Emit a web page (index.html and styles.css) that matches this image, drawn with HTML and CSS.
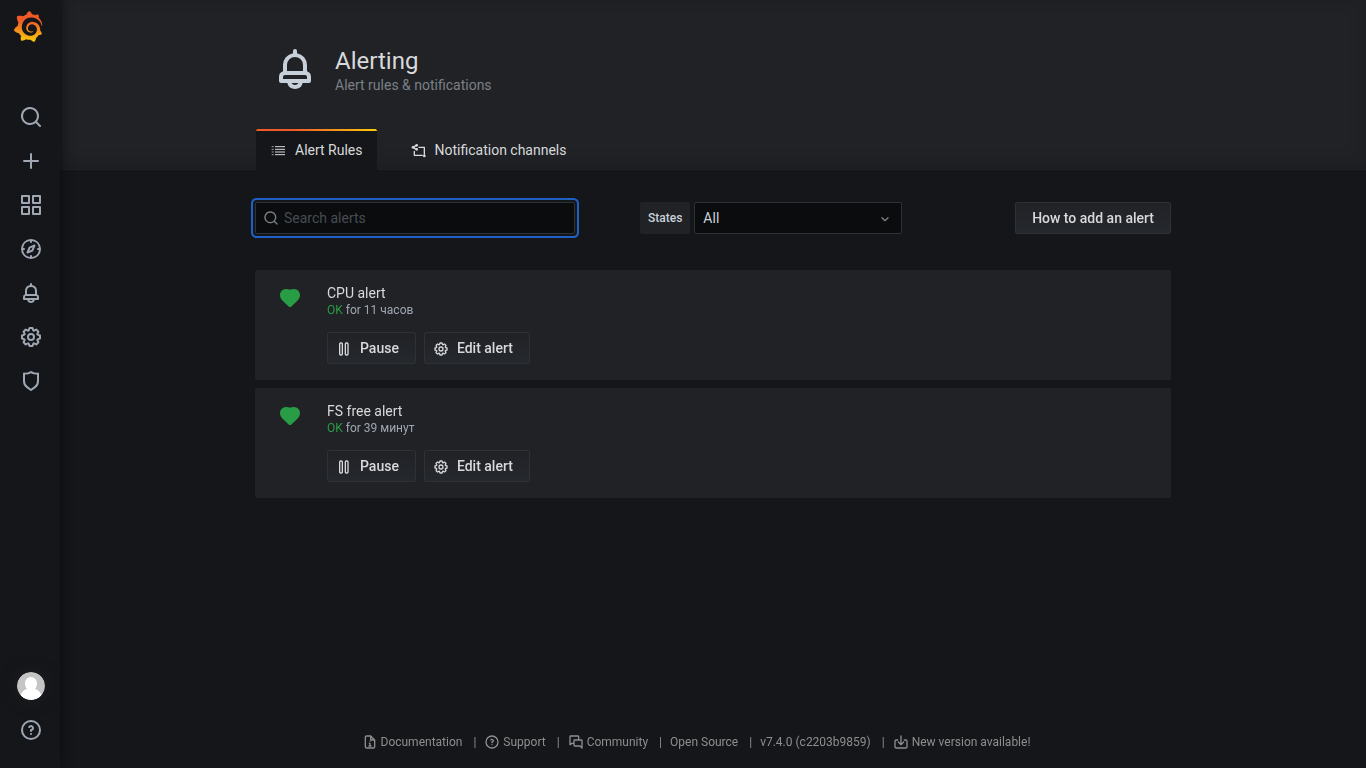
FILE: index.html
```html
<!DOCTYPE html>
<html lang="en">
<head>
<meta charset="utf-8">
<meta name="viewport" content="width=device-width, initial-scale=1">
<title>Alerting - Grafana</title>
<link rel="stylesheet" href="styles.css">
</head>
<body>
<svg class="sprite" aria-hidden="true">
  <symbol id="search" viewBox="0 0 24 24"><path d="M21.71,20.29,18,16.61A9,9,0,1,0,16.61,18l3.68,3.68a1,1,0,0,0,1.42,0A1,1,0,0,0,21.71,20.29ZM11,18a7,7,0,1,1,7-7A7,7,0,0,1,11,18Z"/></symbol>
  <symbol id="plus" viewBox="0 0 24 24"><path d="M19,11H13V5a1,1,0,0,0-2,0v6H5a1,1,0,0,0,0,2h6v6a1,1,0,0,0,2,0V13h6a1,1,0,0,0,0-2Z"/></symbol>
  <symbol id="apps" viewBox="0 0 24 24"><path d="M10,13H3a1,1,0,0,0-1,1v7a1,1,0,0,0,1,1h7a1,1,0,0,0,1-1V14A1,1,0,0,0,10,13ZM9,20H4V15H9ZM21,2H14a1,1,0,0,0-1,1v7a1,1,0,0,0,1,1h7a1,1,0,0,0,1-1V3A1,1,0,0,0,21,2ZM20,9H15V4h5Zm1,4H14a1,1,0,0,0-1,1v7a1,1,0,0,0,1,1h7a1,1,0,0,0,1-1V14A1,1,0,0,0,21,13Zm-1,7H15V15h5ZM10,2H3A1,1,0,0,0,2,3v7a1,1,0,0,0,1,1h7a1,1,0,0,0,1-1V3A1,1,0,0,0,10,2ZM9,9H4V4H9Z"/></symbol>
  <symbol id="compass" viewBox="0 0 24 24"><path d="M12,2A10,10,0,1,0,22,12,10,10,0,0,0,12,2Zm1,17.93V19a1,1,0,0,0-2,0v.93A8,8,0,0,1,4.07,13H5a1,1,0,0,0,0-2H4.07A8,8,0,0,1,11,4.07V5a1,1,0,0,0,2,0V4.07A8,8,0,0,1,19.93,11H19a1,1,0,0,0,0,2h.93A8,8,0,0,1,13,19.93ZM15.14,7.55l-5,2.12a1,1,0,0,0-.52.52l-2.12,5a1,1,0,0,0,.21,1.1,1,1,0,0,0,.7.3.93.93,0,0,0,.4-.09l5-2.12a1,1,0,0,0,.52-.52l2.12-5a1,1,0,0,0-1.31-1.31Zm-2.49,5.1-2.28,1,1-2.28,2.28-1Z"/></symbol>
  <symbol id="bell" viewBox="0 0 24 24"><path d="M18,13.18V10a6,6,0,0,0-5-5.91V3a1,1,0,0,0-2,0V4.09A6,6,0,0,0,6,10v3.18A3,3,0,0,0,4,16v2a1,1,0,0,0,1,1H8.14a4,4,0,0,0,7.72,0H19a1,1,0,0,0,1-1V16A3,3,0,0,0,18,13.18ZM8,10a4,4,0,0,1,8,0v3H8Zm4,10a2,2,0,0,1-1.72-1h3.44A2,2,0,0,1,12,20Zm6-3H6V16a1,1,0,0,1,1-1H17a1,1,0,0,1,1,1Z"/></symbol>
  <symbol id="cog" viewBox="0 0 24 24"><path d="M21.32,9.55l-1.89-.63.89-1.78A1,1,0,0,0,20.13,6L18,3.87a1,1,0,0,0-1.15-.19l-1.78.89-.63-1.89A1,1,0,0,0,13.5,2h-3a1,1,0,0,0-.95.68L8.92,4.57,7.14,3.68A1,1,0,0,0,6,3.87L3.87,6a1,1,0,0,0-.19,1.15l.89,1.78-1.89.63A1,1,0,0,0,2,10.5v3a1,1,0,0,0,.68.95l1.89.63-.89,1.78A1,1,0,0,0,3.87,18L6,20.13a1,1,0,0,0,1.15.19l1.78-.89.63,1.89a1,1,0,0,0,.95.68h3a1,1,0,0,0,.95-.68l.63-1.89,1.78.89A1,1,0,0,0,18,20.13L20.13,18a1,1,0,0,0,.19-1.15l-.89-1.78,1.89-.63A1,1,0,0,0,22,13.5v-3A1,1,0,0,0,21.32,9.55ZM20,12.78l-1.2.4A2,2,0,0,0,17.64,16l.57,1.14-1.1,1.1L16,17.64a2,2,0,0,0-2.79,1.16l-.4,1.2H11.22l-.4-1.2A2,2,0,0,0,8,17.64l-1.14.57-1.1-1.1L6.36,16A2,2,0,0,0,5.2,13.18L4,12.78V11.22l1.2-.4A2,2,0,0,0,6.36,8L5.79,6.89l1.1-1.1L8,6.36A2,2,0,0,0,10.82,5.2l.4-1.2h1.56l.4,1.2A2,2,0,0,0,16,6.36l1.14-.57,1.1,1.1L17.64,8a2,2,0,0,0,1.16,2.79l1.2.4ZM12,8a4,4,0,1,0,4,4A4,4,0,0,0,12,8Zm0,6a2,2,0,1,1,2-2A2,2,0,0,1,12,14Z"/></symbol>
  <symbol id="shield" viewBox="0 0 24 24"><path d="M19.63,3.65a1,1,0,0,0-.84-.2,8,8,0,0,1-6.22-1.27,1,1,0,0,0-1.14,0A8,8,0,0,1,5.21,3.45a1,1,0,0,0-.84.2A1,1,0,0,0,4,4.43v7.45a9,9,0,0,0,3.77,7.33l3.65,2.6a1,1,0,0,0,1.16,0l3.65-2.6A9,9,0,0,0,20,11.88V4.43A1,1,0,0,0,19.63,3.65ZM18,11.88a7,7,0,0,1-2.93,5.7L12,19.77,8.93,17.58A7,7,0,0,1,6,11.88V5.58a10,10,0,0,0,6-1.39,10,10,0,0,0,6,1.39Z"/></symbol>
  <symbol id="question" viewBox="0 0 24 24"><path d="M11.29,15.29a1.58,1.58,0,0,0-.12.15.76.76,0,0,0-.09.18.64.64,0,0,0-.06.18,1.36,1.36,0,0,0,0,.2.84.84,0,0,0,.08.38.9.9,0,0,0,.54.54.94.94,0,0,0,.76,0,.9.9,0,0,0,.54-.54A1,1,0,0,0,13,16a1,1,0,0,0-.29-.71A1,1,0,0,0,11.29,15.29ZM12,2A10,10,0,1,0,22,12,10,10,0,0,0,12,2Zm0,18a8,8,0,1,1,8-8A8,8,0,0,1,12,20ZM12,7A3,3,0,0,0,9.4,8.5a1,1,0,1,0,1.73,1A1,1,0,0,1,12,9a1,1,0,0,1,0,2,1,1,0,0,0-1,1v1a1,1,0,0,0,2,0v-.18A3,3,0,0,0,12,7Z"/></symbol>
  <symbol id="list" viewBox="0 0 24 24"><g fill="none" stroke="currentColor" stroke-width="1.5"><path d="M1 7h3M1 11h3M1 15h3M1 19h3" opacity=".7"/><path d="M6 7h15M6 11h15M6 15h15M6 19h15"/></g></symbol>
  <symbol id="channel" viewBox="0 0 24 24"><g fill="none" stroke="currentColor" stroke-width="2" stroke-linecap="round" stroke-linejoin="round"><path d="M3 8l5-3M3 8l5 3M12 8h8v12M5 14v6h12"/></g><circle cx="3" cy="8" r="2"/><circle cx="8.500" cy="5" r="2"/><circle cx="8.500" cy="11" r="2"/><circle cx="20" cy="21" r="2"/></symbol>
  <symbol id="pause" viewBox="0 0 24 24"><g fill="none" stroke="currentColor" stroke-width="2"><rect x="5.500" y="3" width="4" height="18" rx="1.500"/><rect x="14" y="3" width="4" height="18" rx="1.500"/></g></symbol>
  <symbol id="heart" viewBox="0 0 24 24"><path d="M12 3.800C11 3.100 9.500 2.800 8 2.900 4.600 3 2 5.700 2 9c0 2.200.9 4 2.400 5.400l6.200 6.100c.8.8 2 .8 2.800 0l6.200-6.100C21.100 13 22 11.200 22 9c0-3.300-2.600-6-6-6.100-1.500-.1-3 .2-4 .9z"/></symbol>
  <symbol id="document" viewBox="0 0 24 24"><path d="M13 3H7a2 2 0 0 0-2 2v14a2 2 0 0 0 2 2h10a2 2 0 0 0 2-2V9zM13 3v6h6M12 11h.01M11 14h1v4M10.500 18h3" fill="none" stroke="currentColor" stroke-width="2" stroke-linecap="round" stroke-linejoin="round"/></symbol>
  <symbol id="comments" viewBox="0 0 24 24"><path d="M6 14l-3 2V4a1 1 0 0 1 1-1h11a1 1 0 0 1 1 1v4M10 9h10a1 1 0 0 1 1 1v11l-3-3h-8a1 1 0 0 1-1-1v-7a1 1 0 0 1 1-1zM9 14H5" fill="none" stroke="currentColor" stroke-width="2" stroke-linecap="round" stroke-linejoin="round"/></symbol>
  <symbol id="import" viewBox="0 0 24 24"><path d="M7 9H5a2 2 0 0 0-2 2v8a2 2 0 0 0 2 2h14a2 2 0 0 0 2-2v-8a2 2 0 0 0-2-2h-2M12 3v12M8 12l4 4 4-4" fill="none" stroke="currentColor" stroke-width="2" stroke-linecap="round" stroke-linejoin="round"/></symbol>
  <symbol id="angle-down" viewBox="0 0 24 24"><path d="M7.500 11.500l4.500 4.500 4.500-4.500" fill="none" stroke="currentColor" stroke-width="2" stroke-linecap="round" stroke-linejoin="round"/></symbol>
</svg>
<div class="app">
  <nav class="sidebar" aria-label="Main menu">
    <a class="logo" href="#" aria-label="Home">
      <svg viewBox="0 0 351 365"><defs><linearGradient id="flame" gradientUnits="userSpaceOnUse" x1="175" y1="445" x2="175" y2="114"><stop offset="0" stop-color="#fff100"/><stop offset="1" stop-color="#f05a28"/></linearGradient></defs><path fill="url(#flame)" d="M342,161.2c-0.6-6.1-1.6-13.1-3.6-20.9c-2-7.7-5-16.2-9.4-25c-4.4-8.8-10.1-17.9-17.5-26.8c-2.9-3.5-6.1-6.9-9.5-10.2c5.1-20.3-6.2-37.9-6.2-37.9c-19.5-1.2-31.9,6.1-36.5,9.4c-0.8-0.3-1.5-0.7-2.3-1c-3.3-1.3-6.7-2.6-10.3-3.7c-3.5-1.1-7.1-2.1-10.8-3c-3.7-0.9-7.4-1.6-11.2-2.2c-0.7-0.1-1.3-0.2-2-0.3c-8.5-27.2-32.9-38.6-32.9-38.6c-27.3,17.3-32.4,41.5-32.4,41.5s-0.1,0.5-0.3,1.4c-1.5,0.4-3,0.9-4.5,1.3c-2.1,0.6-4.2,1.4-6.2,2.2c-2.1,0.8-4.1,1.6-6.2,2.5c-4.1,1.8-8.2,3.8-12.2,6c-3.9,2.2-7.7,4.6-11.4,7.1c-0.5-0.2-1-0.4-1-0.4c-37.8-14.4-71.3,2.9-71.3,2.9c-3.1,40.2,15.1,65.5,18.7,70.1c-0.9,2.5-1.7,5-2.5,7.5c-2.8,9.1-4.9,18.4-6.2,28.1c-0.2,1.4-0.4,2.8-0.5,4.2C18.8,192.7,8.5,228,8.5,228c29.1,33.5,63.1,35.6,63.1,35.6c0,0,0.1-0.1,0.1-0.1c4.3,7.7,9.3,15,14.9,21.9c2.4,2.9,4.8,5.6,7.4,8.3c-10.6,30.4,1.5,55.6,1.5,55.6c32.4,1.2,53.7-14.2,58.2-17.7c3.2,1.1,6.5,2.1,9.8,2.9c10,2.6,20.2,4.1,30.4,4.5c2.5,0.1,5.1,0.2,7.6,0.1l1.2,0l0.8,0l1.6,0l1.6-0.1l0,0.1c15.3,21.8,42.1,24.9,42.1,24.9c19.1-20.1,20.2-40.1,20.2-44.4l0,0c0,0,0-0.1,0-0.3c0-0.4,0-0.6,0-0.6l0,0c0-0.3,0-0.6,0-0.9c4-2.8,7.8-5.8,11.4-9.1c7.6-6.9,14.3-14.8,19.9-23.3c0.5-0.8,1-1.6,1.5-2.4c21.6,1.2,36.9-13.4,36.9-13.4c-3.6-22.5-16.4-33.5-19.1-35.6l0,0c0,0-0.1-0.1-0.3-0.2c-0.2-0.1-0.2-0.2-0.2-0.2c0,0,0,0,0,0c-0.1-0.1-0.3-0.2-0.5-0.3c0.1-1.4,0.2-2.7,0.3-4.1c0.2-2.4,0.2-4.9,0.2-7.3l0-1.8l0-0.9l0-0.5c0-0.6,0-0.4,0-0.6l-0.1-1.5l-0.1-2c0-0.7-0.1-1.3-0.2-1.9c-0.1-0.6-0.1-1.3-0.2-1.9l-0.2-1.9l-0.3-1.9c-0.4-2.5-0.8-4.9-1.4-7.4c-2.3-9.7-6.1-18.9-11-27.2c-5-8.3-11.2-15.6-18.3-21.8c-7-6.2-14.9-11.2-23.1-14.9c-8.3-3.7-16.9-6.1-25.5-7.2c-4.3-0.6-8.6-0.8-12.9-0.7l-1.6,0l-0.4,0c-0.1,0-0.6,0-0.5,0l-0.7,0l-1.6,0.1c-0.6,0-1.2,0.1-1.7,0.1c-2.2,0.2-4.4,0.5-6.5,0.9c-8.6,1.6-16.7,4.7-23.8,9c-7.1,4.3-13.3,9.6-18.3,15.6c-5,6-8.9,12.7-11.6,19.6c-2.7,6.9-4.2,14.1-4.6,21c-0.1,1.7-0.1,3.5-0.1,5.2c0,0.4,0,0.9,0,1.3l0.1,1.4c0.1,0.8,0.1,1.7,0.2,2.5c0.3,3.5,1,6.9,1.9,10.1c1.9,6.5,4.9,12.4,8.6,17.4c3.7,5,8.2,9.1,12.9,12.4c4.7,3.2,9.8,5.5,14.8,7c5,1.5,10,2.1,14.7,2.1c0.6,0,1.2,0,1.7,0c0.3,0,0.6,0,0.9,0c0.3,0,0.6,0,0.9-0.1c0.5,0,1-0.1,1.5-0.1c0.1,0,0.3,0,0.4-0.1l0.5-0.1c0.3,0,0.6-0.1,0.9-0.1c0.6-0.1,1.1-0.2,1.7-0.3c0.6-0.1,1.1-0.2,1.6-0.4c1.1-0.2,2.1-0.6,3.1-0.9c2-0.7,4-1.5,5.7-2.4c1.8-0.9,3.4-2,5-3c0.4-0.3,0.9-0.6,1.3-1c1.6-1.3,1.9-3.7,0.6-5.3c-1.1-1.4-3.1-1.8-4.7-0.9c-0.4,0.2-0.8,0.4-1.2,0.6c-1.4,0.7-2.8,1.3-4.3,1.8c-1.5,0.5-3.1,0.9-4.7,1.2c-0.8,0.1-1.6,0.2-2.5,0.3c-0.4,0-0.8,0.1-1.3,0.1c-0.4,0-0.9,0-1.2,0c-0.4,0-0.8,0-1.2,0c-0.5,0-1,0-1.5-0.1c0,0-0.3,0-0.1,0l-0.2,0l-0.3,0c-0.2,0-0.5,0-0.7-0.1c-0.5-0.1-0.9-0.1-1.4-0.2c-3.7-0.5-7.4-1.6-10.9-3.2c-3.6-1.6-7-3.8-10.1-6.6c-3.1-2.8-5.8-6.1-7.9-9.9c-2.1-3.8-3.6-8-4.3-12.4c-0.3-2.2-0.5-4.5-0.4-6.7c0-0.6,0.1-1.2,0.1-1.8c0,0.2,0-0.1,0-0.1l0-0.2l0-0.5c0-0.3,0.1-0.6,0.1-0.9c0.1-1.2,0.3-2.4,0.5-3.6c1.7-9.6,6.5-19,13.9-26.1c1.9-1.8,3.9-3.4,6-4.9c2.1-1.5,4.4-2.8,6.8-3.9c2.4-1.1,4.8-2,7.4-2.7c2.5-0.7,5.1-1.1,7.8-1.4c1.3-0.1,2.6-0.2,4-0.2c0.4,0,0.6,0,0.9,0l1.1,0l0.7,0c0.3,0,0,0,0.1,0l0.3,0l1.1,0.1c2.9,0.2,5.7,0.6,8.5,1.3c5.6,1.2,11.1,3.3,16.2,6.1c10.2,5.7,18.9,14.5,24.2,25.1c2.7,5.3,4.6,11,5.5,16.9c0.2,1.5,0.4,3,0.5,4.5l0.1,1.1l0.1,1.1c0,0.4,0,0.8,0,1.1c0,0.4,0,0.8,0,1.1l0,1l0,1.1c0,0.7-0.1,1.9-0.1,2.6c-0.1,1.6-0.3,3.3-0.5,4.9c-0.2,1.6-0.5,3.2-0.8,4.8c-0.3,1.6-0.7,3.2-1.1,4.7c-0.8,3.1-1.8,6.2-3,9.3c-2.4,6-5.6,11.8-9.4,17.1c-7.7,10.6-18.2,19.2-30.2,24.7c-6,2.7-12.3,4.7-18.8,5.7c-3.2,0.6-6.5,0.9-9.8,1l-0.6,0l-0.5,0l-1.1,0l-1.6,0l-0.8,0c0.4,0-0.1,0-0.1,0l-0.3,0c-1.8,0-3.5-0.1-5.3-0.3c-7-0.5-13.9-1.8-20.7-3.7c-6.7-1.9-13.2-4.6-19.4-7.8c-12.3-6.6-23.4-15.6-32-26.5c-4.3-5.4-8.1-11.3-11.2-17.4c-3.1-6.1-5.6-12.6-7.4-19.1c-1.8-6.6-2.9-13.3-3.4-20.1l-0.1-1.3l0-0.3l0-0.3l0-0.6l0-1.1l0-0.3l0-0.4l0-0.8l0-1.6l0-0.3c0,0,0,0.1,0-0.1l0-0.6c0-0.8,0-1.7,0-2.5c0.1-3.3,0.4-6.8,0.8-10.2c0.4-3.4,1-6.9,1.7-10.3c0.7-3.4,1.5-6.8,2.5-10.2c1.9-6.7,4.3-13.2,7.1-19.3c5.7-12.2,13.1-23.1,22-31.8c2.2-2.2,4.5-4.2,6.9-6.2c2.4-1.9,4.9-3.7,7.5-5.4c2.5-1.7,5.2-3.2,7.9-4.6c1.3-0.7,2.7-1.4,4.1-2c0.7-0.3,1.4-0.6,2.1-0.9c0.7-0.3,1.4-0.6,2.1-0.9c2.8-1.2,5.7-2.2,8.7-3.1c0.7-0.2,1.5-0.4,2.2-0.7c0.7-0.2,1.5-0.4,2.2-0.6c1.5-0.4,3-0.8,4.5-1.1c0.7-0.2,1.5-0.3,2.3-0.5c0.8-0.2,1.5-0.3,2.3-0.5c0.8-0.1,1.5-0.3,2.3-0.4l1.1-0.2l1.2-0.2c0.8-0.1,1.5-0.2,2.3-0.3c0.9-0.1,1.7-0.2,2.6-0.3c0.7-0.1,1.9-0.2,2.6-0.3c0.5-0.1,1.1-0.1,1.6-0.2l1.1-0.1l0.5-0.1l0.6,0c0.9-0.1,1.7-0.1,2.6-0.2l1.3-0.1c0,0,0.5,0,0.1,0l0.3,0l0.6,0c0.7,0,1.5-0.1,2.2-0.1c2.9-0.1,5.9-0.1,8.8,0c5.8,0.2,11.5,0.9,17,1.9c11.1,2.1,21.5,5.6,31,10.3c9.5,4.6,17.9,10.3,25.3,16.5c0.5,0.4,0.9,0.8,1.4,1.2c0.4,0.4,0.9,0.8,1.3,1.2c0.9,0.8,1.7,1.6,2.6,2.4c0.9,0.8,1.7,1.6,2.5,2.4c0.8,0.8,1.6,1.6,2.4,2.5c3.1,3.3,6,6.6,8.6,10c5.2,6.7,9.4,13.5,12.7,19.9c0.2,0.4,0.4,0.8,0.6,1.2c0.2,0.4,0.4,0.8,0.6,1.2c0.4,0.8,0.8,1.6,1.1,2.4c0.4,0.8,0.7,1.5,1.1,2.3c0.3,0.8,0.7,1.5,1,2.3c1.2,3,2.4,5.9,3.3,8.6c1.5,4.4,2.6,8.3,3.5,11.7c0.3,1.4,1.6,2.3,3,2.1c1.5-0.1,2.6-1.3,2.6-2.8C342.6,170.4,342.5,166.1,342,161.2z"/></svg>
    </a>
    <div class="menu">
      <a class="menu-item" href="#" aria-label="Search"><svg><use href="#search"/></svg></a>
      <a class="menu-item" href="#" aria-label="Create"><svg><use href="#plus"/></svg></a>
      <a class="menu-item" href="#" aria-label="Dashboards"><svg><use href="#apps"/></svg></a>
      <a class="menu-item" href="#" aria-label="Explore"><svg><use href="#compass"/></svg></a>
      <a class="menu-item" href="#" aria-label="Alerting"><svg><use href="#bell"/></svg></a>
      <a class="menu-item" href="#" aria-label="Configuration"><svg><use href="#cog"/></svg></a>
      <a class="menu-item" href="#" aria-label="Server admin"><svg><use href="#shield"/></svg></a>
    </div>
    <div class="menu menu-bottom">
      <a class="menu-item" href="#" aria-label="Profile"><svg class="avatar" viewBox="0 0 28 28"><clipPath id="disc"><circle cx="14" cy="14" r="14"/></clipPath><g clip-path="url(#disc)"><path fill="#c5c5c5" d="M0 0h28v28H0z"/><path fill="#fff" d="M14 5a6 6 0 0 1 6 6c0 3-1 5-2 6 4 1 6 4 7 8l-4 3H7l-4-3c1-4 3-7 7-8-1-1-2-3-2-6a6 6 0 0 1 6-6z"/></g></svg></a>
      <a class="menu-item" href="#" aria-label="Help"><svg><use href="#question"/></svg></a>
    </div>
  </nav>
  <div class="view">
    <header class="page-header">
      <div class="container">
        <div class="heading">
          <svg class="heading-icon"><use href="#bell"/></svg>
          <div class="heading-text">
            <h1 class="title">Alerting</h1>
            <div class="subtitle">Alert rules &amp; notifications</div>
          </div>
        </div>
        <nav class="tabs" aria-label="Alerting pages">
          <a class="tab tab-active" href="#" aria-current="page"><svg class="icon"><use href="#list"/></svg>Alert Rules</a>
          <a class="tab" href="#"><svg class="icon"><use href="#channel"/></svg>Notification channels</a>
        </nav>
      </div>
    </header>
    <main class="container body">
      <div class="toolbar">
        <label class="search"><svg class="icon"><use href="#search"/></svg><input type="text" placeholder="Search alerts" aria-label="Search alerts" autofocus></label>
        <div class="states">
          <label class="states-label" for="states">States</label>
          <div class="select">
            <select id="states"><option>All</option><option>OK</option><option>Not OK</option><option>Alerting</option><option>No data</option><option>Paused</option><option>Pending</option></select>
            <svg class="icon"><use href="#angle-down"/></svg>
          </div>
        </div>
        <button class="button button-help" type="button">How to add an alert</button>
      </div>
      <ul class="rules">
        <li class="rule">
          <svg class="heart"><use href="#heart"/></svg>
          <div class="rule-body">
            <a class="rule-name" href="#">CPU alert</a>
            <div class="rule-state"><span class="ok">OK</span> for 11 часов</div>
            <div class="actions">
              <button class="button" type="button"><svg class="icon"><use href="#pause"/></svg>Pause</button>
              <button class="button" type="button"><svg class="icon"><use href="#cog"/></svg>Edit alert</button>
            </div>
          </div>
        </li>
        <li class="rule">
          <svg class="heart"><use href="#heart"/></svg>
          <div class="rule-body">
            <a class="rule-name" href="#">FS free alert</a>
            <div class="rule-state"><span class="ok">OK</span> for 39 минут</div>
            <div class="actions">
              <button class="button" type="button"><svg class="icon"><use href="#pause"/></svg>Pause</button>
              <button class="button" type="button"><svg class="icon"><use href="#cog"/></svg>Edit alert</button>
            </div>
          </div>
        </li>
      </ul>
    </main>
    <footer class="footer">
      <ul class="links">
        <li><a href="#"><svg class="icon"><use href="#document"/></svg>Documentation</a></li>
        <li><a href="#"><svg class="icon"><use href="#question"/></svg>Support</a></li>
        <li><a href="#"><svg class="icon"><use href="#comments"/></svg>Community</a></li>
        <li><a href="#">Open Source</a></li>
        <li><a href="#">v7.4.0 (c2203b9859)</a></li>
        <li><a href="#"><svg class="icon"><use href="#import"/></svg>New version available!</a></li>
      </ul>
    </footer>
  </div>
</div>
</body>
</html>
```
FILE: styles.css
```css
*, *::before, *::after { box-sizing: border-box; }

body {
  margin: 0;
  background: #141619;
  color: #d8d9da;
  font: 14px/20px Roboto, "Liberation Sans", sans-serif;
}

a { color: inherit; text-decoration: none; }
svg { fill: currentColor; flex: none; }
ul { list-style: none; margin: 0; padding: 0; }
input, select, button { font: inherit; color: inherit; }

.sprite { display: none; }
.icon { width: 16px; height: 16px; }
.app { display: flex; min-height: 100vh; }

.sidebar {
  display: flex;
  flex-direction: column;
  flex: none;
  width: 60px;
  background: #141619;
  color: #9fa7b3;
  box-shadow: 0 0 10px #0b0c0e;
  z-index: 1;
}
.logo { padding: 11px 0 0 13px; }
.logo svg { display: block; width: 30px; height: 31px; }
.menu { display: flex; flex-direction: column; padding: 53px 0 0 2px; }
.menu-item { display: flex; align-items: center; justify-content: center; height: 44px; }
.menu-item svg { width: 24px; height: 24px; }
.menu-item .avatar { width: 28px; height: 28px; border-radius: 50%; box-shadow: 0 0 14px 2px #1b1d20; }
.menu-bottom { margin-top: auto; padding: 0 0 16px 2px; }

.view { display: flex; flex-direction: column; flex: 1; min-width: 0; }
.container { width: 100%; max-width: 980px; margin: 0 auto; padding: 0 32px; }

.page-header {
  background: #202226;
  border-bottom: 1px solid #202226;
  box-shadow: inset 0 -4px 14px #1b1d20;
}
.heading { display: flex; align-items: flex-start; gap: 16px; padding: 45px 0 34px 16px; }
.heading-icon { width: 48px; height: 48px; color: #c7d0d9; }
.heading-text { padding-top: 2px; }
.title { margin: 0; font-size: 24px; line-height: 28px; font-weight: 400; }
.subtitle { color: #7b8087; }

.tabs { display: flex; gap: 19px; padding-left: 1px; }
.tab { display: flex; align-items: center; gap: 8px; height: 40px; padding: 2px 14px 0 15px; position: relative; }
.tab-active { background: #141619; margin-bottom: -1px; height: 41px; padding-bottom: 1px; }
.tab-active::before {
  content: "";
  position: absolute;
  inset: 0 0 auto;
  height: 2px;
  border-radius: 2px 2px 0 0;
  background: linear-gradient(to right, #f05a28 30%, #fbca0a 99%);
}

.body { flex: 1; padding-top: 32px; }
.toolbar { display: flex; align-items: center; margin-bottom: 36px; }
.search {
  display: flex;
  align-items: center;
  width: 320px;
  height: 32px;
  padding: 0 7px;
  gap: 5px;
  border: 1px solid #2c3235;
  border-radius: 2px;
  background: #0b0c0e;
  color: #7b8087;
  box-shadow: 0 0 0 2px #141619, 0 0 0 4px #1f60c4;
}
.search input { flex: 1; min-width: 0; padding: 0; border: 0; outline: 0; background: none; color: #c7d0d9; caret-color: transparent; }
.search input::placeholder { color: #464c54; opacity: 1; }

.states { display: flex; gap: 4px; margin: 0 auto 0 65px; color: #c7d0d9; }
.states-label { padding: 6px 8px; background: #202226; border-radius: 2px; font-size: 12px; font-weight: 500; }
.select { display: grid; align-items: center; width: 208px; }
.select > * { grid-area: 1 / 1; }
.select select {
  width: 100%;
  height: 32px;
  padding: 0 8px;
  border: 1px solid #2c3235;
  border-radius: 2px;
  background: #0b0c0e;
  appearance: none;
}
.select .icon { justify-self: end; margin-right: 9px; color: #7b8087; pointer-events: none; }

.button {
  display: flex;
  align-items: center;
  gap: 8px;
  height: 32px;
  padding: 0 16px 0 8px;
  border: 1px solid #2c3235;
  border-radius: 2px;
  background: linear-gradient(#202226, #25282d);
  font-weight: 500;
}
.button .icon { margin-top: 2px; }
.button-help { padding: 0 16px; }

.rules { display: flex; flex-direction: column; gap: 8px; }
.rule { display: flex; gap: 24px; padding: 14px 16px 16px; background: #202226; border-radius: 2px; }
.heart { width: 24px; height: 24px; margin: 2px 0 0 7px; color: #299c46; }
.rule-body { flex: 1; padding-left: 1px; }
.rule-name { display: block; line-height: 18px; }
.rule-state { color: #9fa7b3; font-size: 12px; line-height: 16px; }
.ok { color: #299c46; }
.actions { display: flex; gap: 8px; padding-top: 14px; }

.footer { padding: 16px 66px 16px 32px; color: #8e8e8e; font-size: 12px; }
.links { display: flex; flex-wrap: wrap; justify-content: center; }
.links li, .links a { display: flex; align-items: center; }
.links a { gap: 3px; }
.links li:not(:last-child)::after { content: "|"; margin: 0 8px 0 11px; }
```
